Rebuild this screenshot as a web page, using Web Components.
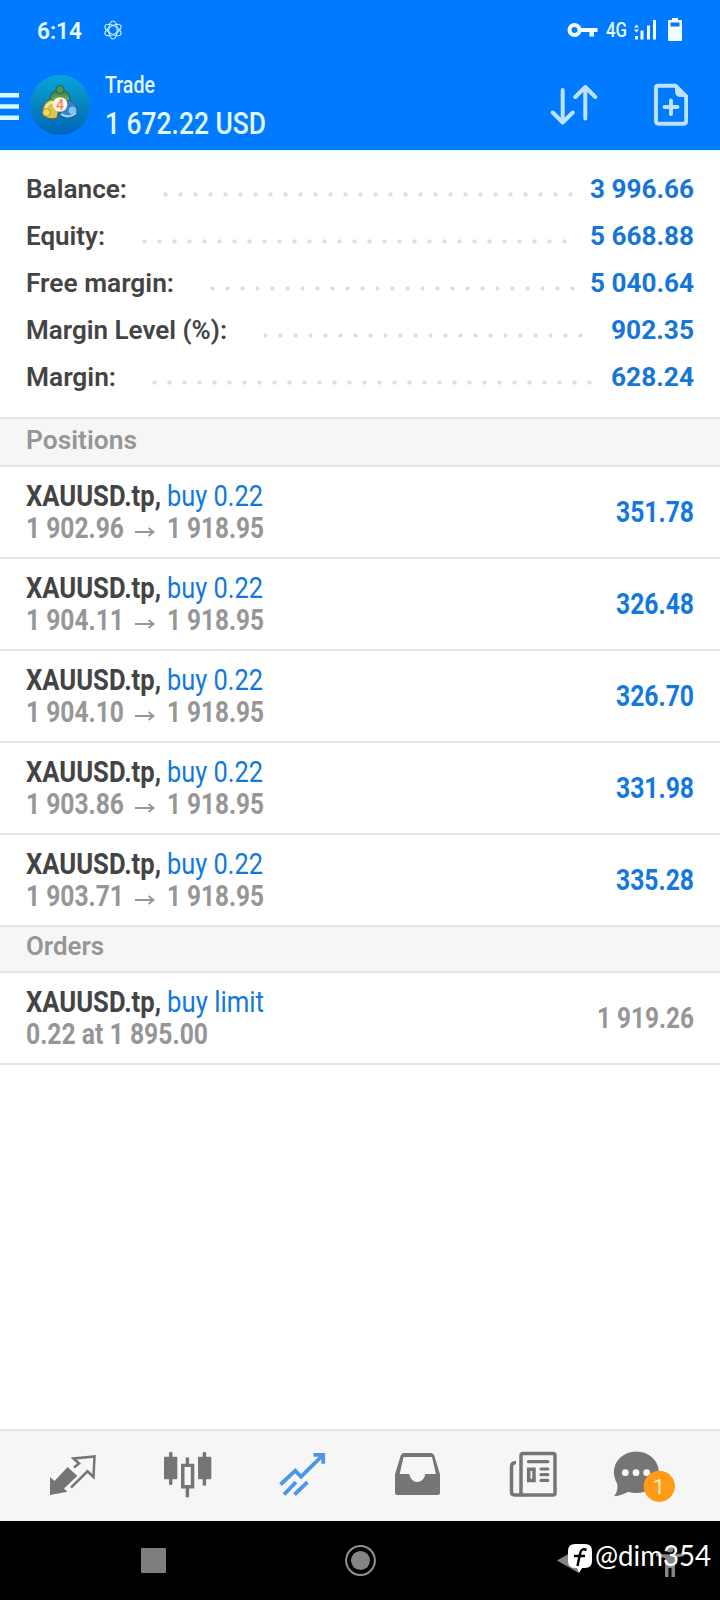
<!DOCTYPE html>
<html lang="en">
<head>
<meta charset="utf-8">
<title>Trade</title>
<style>
  body {
    margin: 0;
    background: #fff;
    font-family: Roboto, "Liberation Sans", sans-serif;
  }
</style>
</head>
<body>
<trade-app></trade-app>

<script>
// text squeezed or stretched to a given width in px
customElements.define('fit-text', class extends HTMLElement {
  constructor() {
    super();
    this.attachShadow({ mode: 'open' }).innerHTML = `
    <style>
      :host { display: inline-block; white-space: nowrap; }
      span { display: inline-block; transform-origin: 0 50%; }
    </style>
    <span><slot></slot></span>`;
  }

  connectedCallback() {
    const width = Number(this.getAttribute('width'));
    const span = this.shadowRoot.querySelector('span');
    const natural = span.getBoundingClientRect().width;
    this.style.width = width + 'px';
    span.style.transform = `scaleX(${width / natural})`;
  }
});

customElements.define('status-bar', class extends HTMLElement {
  constructor() {
    super();
    this.attachShadow({ mode: 'open' }).innerHTML = `
    <style>
      :host {
        display: flex;
        align-items: center;
        height: 60px;
        padding: 0 37px;
        background: #007aff;
        color: #e6faff;
      }
      .time { font-size: 23px; font-weight: 600; line-height: 28px; margin-top: 3px; }
      .atom { margin-left: 22px; }
      .icons { margin-left: auto; display: flex; align-items: center; }
      .net { font-size: 20px; font-weight: 500; line-height: 24px; margin-left: 8px; }
      .signal { margin-left: 7px; }
      .battery { margin-left: 12px; margin-right: 1px; }
      svg { display: block; }
    </style>
    <fit-text class="time" width="45">6:14</fit-text>
    <svg class="atom" width="18" height="20" viewBox="-9 -10 18 20" fill="none" stroke="#d4f3ff" stroke-width="1.100">
      <ellipse rx="4.200" ry="9"/><ellipse rx="4.200" ry="9" transform="rotate(60)"/><ellipse rx="4.200" ry="9" transform="rotate(-60)"/>
    </svg>
    <div class="icons">
      <svg width="31" height="16" viewBox="0 0 31 16" fill="#f2fdff">
        <circle cx="7.500" cy="8" r="5" fill="none" stroke="#f2fdff" stroke-width="4"/>
        <path d="M13 6H30.500V10H27V14.500H22.500V10H13Z"/>
      </svg>
      <fit-text class="net" width="21">4G</fit-text>
      <svg class="signal" width="22" height="20" viewBox="0 0 22 20" fill="#f2fdff">
        <path d="M0 7.500 2.500 4.500 5 7.500ZM0 9.500 2.500 12.500 5 9.500ZM1 16h3v3.500H1ZM6.500 10.500h3v9h-3ZM13 5.500h3v14h-3ZM19 0h3v19.500h-3Z"/>
      </svg>
      <svg class="battery" width="14" height="24" viewBox="0 0 14 24">
        <path fill="#f2fdff" fill-rule="evenodd" d="M4 0h6v2h3q1 0 1 1v19q0 1-1 1H1q-1 0-1-1V3q0-1 1-1h3ZM2.500 4.500v4h9v-4Z"/>
      </svg>
    </div>`;
  }
});

customElements.define('app-bar', class extends HTMLElement {
  constructor() {
    super();
    this.attachShadow({ mode: 'open' }).innerHTML = `
    <style>
      :host {
        display: flex;
        height: 90px;
        background: #007aff;
        color: #e2f8ff;
      }
      svg { display: block; flex: none; }
      .menu { margin-top: 33px; }
      .logo { margin: 15px 0 0 11px; }
      .titles { margin-left: 15px; padding-top: 11px; display: flex; flex-direction: column; align-items: flex-start; }
      .title { font-size: 24px; font-weight: 500; line-height: 28px; }
      .sum { font-size: 32px; font-weight: 500; line-height: 38px; margin-top: 5px; }
      .sort { margin: 22px 0 0 auto; }
      .new { margin: 23px 32px 0 56px; }
    </style>
    <svg class="menu" width="19" height="28" viewBox="0 0 19 28" fill="#dcf9ff"><path d="M0 0h19v4.500H0ZM0 11.200h19v4.600H0ZM0 22.400h19V27H0Z"/></svg>
    <svg class="logo" width="60" height="60" viewBox="0 0 60 60">
      <defs>
        <linearGradient id="sky" x1="0" y1="0" x2="0" y2="1"><stop offset="0" stop-color="#08a5dc"/><stop offset=".5" stop-color="#0784bd"/><stop offset="1" stop-color="#0064bd"/></linearGradient>
        <linearGradient id="green" x1="0" y1="0" x2="0" y2="1"><stop offset="0" stop-color="#2f7d43"/><stop offset="1" stop-color="#9ccc74"/></linearGradient>
      </defs>
      <circle cx="30" cy="30" r="30" fill="url(#sky)"/>
      <path d="M20 28Q19 15 30 15T40 28L36 33H24Z" fill="url(#green)" stroke="#285f4d"/>
      <circle cx="30" cy="14.500" r="4" fill="#4c9a50" stroke="#285f4d"/>
      <path d="M22 24Q12 27 12.500 38Q16 46 27 43L29 33Z" fill="#d9c64c" stroke="#695f38"/>
      <path d="M16 36Q15 29 23 27" fill="none" stroke="#f5eb9a" stroke-width="2"/>
      <circle cx="16.500" cy="37.500" r="3.800" fill="#f2dc5a" stroke="#8b7a35" stroke-width=".7"/>
      <path d="M39 25Q48 29 47.500 38Q42 47 31 42L30 32Z" fill="#3285c9" stroke="#245b85"/>
      <path d="M31 39Q38 44 46 38" fill="none" stroke="#a6dcfa" stroke-width="2"/>
      <circle cx="42.500" cy="35.500" r="3.800" fill="#7cc6f3"/>
      <circle cx="30" cy="29.500" r="7.300" fill="#fff5ec"/>
      <text x="30" y="34.500" text-anchor="middle" font-size="14" font-weight="600" fill="#ef915f">4</text>
    </svg>
    <div class="titles">
      <fit-text class="title" width="50">Trade</fit-text>
      <fit-text class="sum" width="161">1 672.22 USD</fit-text>
    </div>
    <svg class="sort" width="48" height="46" viewBox="550 82 48 46" fill="none" stroke="#bfe2ff" stroke-width="4" stroke-linecap="round" stroke-linejoin="round">
      <path d="M562.700 90V122M552.700 112.500l10 10 10-10M585.300 118.500V87M575.300 97l10-10 10 10"/>
    </svg>
    <svg class="new" width="34" height="44" viewBox="0 0 34 44">
      <path d="M4 2.800H21.500L32.200 13.500V38Q32.200 40.700 29.500 40.700H4.500Q2 40.700 2 38V5Q2 2.800 4 2.800Z" fill="none" stroke="#bfe2ff" stroke-width="3.900"/>
      <path d="M21 2V8Q21 14 27 14H33V12L23 2Z" fill="#bfe2ff"/>
      <path d="M17 17.500V31M10.500 24H23.500" stroke="#bfe2ff" stroke-width="3.900" stroke-linecap="round"/>
    </svg>`;
  }
});

customElements.define('summary-row', class extends HTMLElement {
  constructor() {
    super();
    const [lw, vw, from, to] = this.getAttribute('fit').split(' ').map(Number);
    this.attachShadow({ mode: 'open' }).innerHTML = `
    <style>
      :host {
        display: flex;
        height: 47px;
        line-height: 47px;
        padding: 0 26px;
        font-size: 26px;
        font-weight: 600;
        color: #444;
      }
      .dots {
        width: ${to - from + 15}px;
        height: 5px;
        margin: 26px 0 0 ${from - 7.5 - 26 - lw}px;
        background: radial-gradient(circle, #dedede 1.600px, transparent 2.600px) 0 0 / 15px 5px;
      }
      .value { margin-left: auto; color: #1676d8; font-weight: 700; }
    </style>
    <fit-text width="${lw}">${this.getAttribute('label')}</fit-text>
    <div class="dots"></div>
    <fit-text class="value" width="${vw}">${this.getAttribute('value')}</fit-text>`;
  }
});

customElements.define('section-head', class extends HTMLElement {
  constructor() {
    super();
    this.attachShadow({ mode: 'open' }).innerHTML = `
    <style>
      :host {
        display: block;
        box-sizing: border-box;
        height: 46px;
        padding-left: 26px;
        border-bottom: 2px solid #e4e4e4;
        background: #f6f6f6;
        color: #969696;
        font-size: 26px;
        font-weight: 600;
        line-height: 38px;
      }
      :host([first]) {
        height: 50px;
        border-top: 2px solid #e4e4e4;
        line-height: 42px;
      }
    </style>
    <slot></slot>`;
  }
});

customElements.define('trade-row', class extends HTMLElement {
  constructor() {
    super();
    this.attachShadow({ mode: 'open' }).innerHTML = `
    <style>
      :host {
        display: flex;
        box-sizing: border-box;
        height: 92px;
        padding: 0 26px;
        border-bottom: 2px solid #e4e4e4;
        font-size: 29px;
        line-height: 32px;
        color: #969696;
        font-weight: 700;
      }
      .lines { padding-top: 13px; }
      .line { display: flex; height: 32px; }
      .symbol { color: #444; font-weight: 700; margin-right: 6px; }
      .side { color: #1278dc; font-weight: 400; }
      .arrow { margin: 14px 12px 0 11px; }
      .value { margin-left: auto; line-height: 90px; color: #1278e0; font-weight: 700; }
      :host([pending]) .value { color: #969696; }
    </style>
    <div class="lines">
      <div class="line">
        <fit-text class="symbol" width="135">XAUUSD.tp,</fit-text>
        <fit-text class="side" width="${this.hasAttribute('pending') ? 97 : 96}">${this.getAttribute('side')}</fit-text>
      </div>
      <div class="line">${this.detail()}</div>
    </div>
    <fit-text class="value" width="${this.hasAttribute('pending') ? 97 : 78}">${this.getAttribute('value')}</fit-text>`;
  }

  detail() {
    if (this.hasAttribute('pending')) {
      return `<fit-text width="182">${this.getAttribute('detail')}</fit-text>`;
    }
    return `<fit-text width="98">${this.getAttribute('open')}</fit-text>
        <svg class="arrow" width="20" height="12" viewBox="0 0 20 12" fill="none" stroke="#969696" stroke-width="2"><path d="M0 6H18M13.500 2 18.500 6 13.500 10"/></svg>
        <fit-text width="97">1 918.95</fit-text>`;
  }
});

customElements.define('tab-bar', class extends HTMLElement {
  constructor() {
    super();
    this.attachShadow({ mode: 'open' }).innerHTML = `
    <style>
      :host {
        display: grid;
        grid-template-columns: repeat(6, 115px);
        justify-content: center;
        align-items: center;
        justify-items: center;
        box-sizing: border-box;
        height: 92px;
        border-top: 2px solid #e4e4e4;
        background: #f6f6f6;
      }
      svg { display: block; width: 80px; height: 80px; }
    </style>
    <svg viewBox="-39.500 -40 80 80">
      <path fill="#757575" d="M-22.500 1-18 5-4.800-9 4.800 0-8.500 12.500-5 15.700-22.500 19Z"/>
      <path fill="none" stroke="#757575" stroke-width="2.500" d="M1.500-8.500 6.500-12.500 1-17.500 22-19.500 21 1 15-4.700-1.500 11.700"/>
    </svg>
    <svg viewBox="-39.500 -40 80 80" fill="#757575">
      <rect x="-23.500" y="-19.300" width="13.300" height="22.500" rx="1"/>
      <rect x="-18.500" y="-24.300" width="3.400" height="33.300" rx="1.500"/>
      <path fill-rule="evenodd" d="M-6.500-12.300H6.800V12.400H-6.500ZM-3-9V9H3.300V-9Z"/>
      <path d="M-1.800-18.500h3.400v7h-3.400ZM-1.800 11.500h3.400v9.700h-3.400Z"/>
      <rect x="10.500" y="-19.300" width="13.300" height="22.500" rx="1"/>
      <rect x="15.200" y="-24.300" width="3.400" height="34" rx="1.500"/>
    </svg>
    <svg viewBox="-39.500 -40 80 80" fill="none" stroke="#4b96e8" stroke-width="3.800">
      <path d="M-22 8.500-7.200-5.300-1.500.7 20.500-21M11-21.200H20.700V-12.300M-18.500 18.500-6.500 6.200M-8 18.500 5 6.200"/>
    </svg>
    <svg viewBox="-39.500 -40 80 80">
      <path fill="#757575" fill-rule="evenodd" d="M-22.500-1.500-16.800-20.500Q-16-23-13.500-23H13.500Q16-23 16.800-20.500L22.500-1.500V16.500Q22.500 19 20 19H-20Q-22.500 19-22.500 16.500ZM-14-19-17.800-2H-8.200A8.100 9.400 0 0 0 7.800-2H18.500L14.500-19Z"/>
    </svg>
    <svg viewBox="-39.500 -40 80 80" fill="none" stroke="#757575" stroke-width="3.500">
      <rect x="-11.500" y="-22.600" width="34" height="41.500" rx="2"/>
      <path d="M-16.500-13.500Q-21-13.500-21-9V16Q-21 18.900-18 18.900H-10"/>
      <path stroke-width="3.200" stroke-linecap="round" d="M-4-14.300H15.300M8.500-7H15.300M8.500-1.300H15.300M8.500 4.400H15.300"/>
      <path d="M-3.800-6.700H1.500V4.500H-3.800Z"/>
    </svg>
    <svg viewBox="-39.500 -40 80 80">
      <ellipse cx="-11.200" cy="-3.700" rx="22.500" ry="20.800" fill="#757575"/>
      <path d="M-31 5Q-28 14-33.500 20.300-26 20-18 15Z" fill="#757575"/>
      <g fill="#f6f6f6"><circle cx="-22.200" cy="-3.300" r="3.400"/><circle cx="-11.500" cy="-3.300" r="3.400"/><circle cx="-.8" cy="-3.300" r="3.400"/></g>
      <circle cx="11.800" cy="10.300" r="15.600" fill="#ff9b17"/>
      <text x="11.300" y="18" text-anchor="middle" font-size="21" fill="#fff0cf">1</text>
    </svg>`;
  }
});

customElements.define('nav-bar', class extends HTMLElement {
  constructor() {
    super();
    this.attachShadow({ mode: 'open' }).innerHTML = `
    <style>
      :host {
        display: flex;
        position: relative;
        height: 79px;
        padding-left: 141px;
        background: #000;
      }
      svg { display: block; }
      .square { width: 25px; height: 25px; margin-top: 27px; border-radius: 1px; background: #7e7e7e; }
      .home { margin: 23px 0 0 178px; }
      .back { margin: 23px 0 0 181px; }
      .person { margin: 24px 0 0 73px; }
      /* user tag lies over the buttons */
      .tag {
        position: absolute;
        left: 567px;
        top: 16px;
        display: flex;
        color: #fff;
        font: 28px/36px Lato, sans-serif;
      }
      .tag svg { margin: 6px 2px 0 0; }
    </style>
    <div class="square"></div>
    <svg class="home" width="32" height="32" viewBox="-16.500 -16.500 32 32"><circle r="14.400" fill="none" stroke="#929292" stroke-width="2"/><circle r="9.500" fill="#858585"/></svg>
    <svg class="back" width="26" height="32" viewBox="0 0 26 32"><path d="M0 16.500 22 4V29Z" fill="#858585"/></svg>
    <svg class="person" width="28" height="34" viewBox="0 0 28 34" fill="#858585"><circle cx="14" cy="4" r="3.500"/><path d="M0 8Q14 11 28 8V11L19 13V32H15.500V23H12.500V32H9V13L0 11Z"/></svg>
    <div class="tag">
      <svg width="26" height="31" viewBox="0 0 26 31">
        <path fill="#fff" d="M8 1H18Q25 1 25 8V18Q25 25 18 25H15L12 30 10 25H8Q1 25 1 18V8Q1 1 8 1Z"/>
        <path d="M19.500 7Q14 4.500 13 11L10.500 23M7 13H18" fill="none" stroke="#000" stroke-width="2.500"/>
      </svg>
      <fit-text width="116">@dim354</fit-text>
    </div>`;
  }
});

customElements.define('trade-app', class extends HTMLElement {
  constructor() {
    super();
    this.attachShadow({ mode: 'open' }).innerHTML = `
    <style>
      :host {
        display: flex;
        flex-direction: column;
        width: 720px;
        height: 1600px;
        overflow: hidden;
      }
      .summary { box-sizing: border-box; height: 267px; padding-top: 15px; border-top: 1px solid #d5fbff; }
      main { flex: 1; }
    </style>
    <status-bar></status-bar>
    <app-bar></app-bar>
    <main>
      <div class="summary">
        <summary-row label="Balance:" value="3 996.66" fit="101 104 165.500 570.500"></summary-row>
        <summary-row label="Equity:" value="5 668.88" fit="79 104 144.500 564.500"></summary-row>
        <summary-row label="Free margin:" value="5 040.64" fit="148 104 212.500 572.500"></summary-row>
        <summary-row label="Margin Level (%):" value="902.35" fit="201 83 265.500 580.500"></summary-row>
        <summary-row label="Margin:" value="628.24" fit="90 83 154.500 589.500"></summary-row>
      </div>
      <section-head first><fit-text width="111">Positions</fit-text></section-head>
      <trade-row side="buy 0.22" open="1 902.96" value="351.78"></trade-row>
      <trade-row side="buy 0.22" open="1 904.11" value="326.48"></trade-row>
      <trade-row side="buy 0.22" open="1 904.10" value="326.70"></trade-row>
      <trade-row side="buy 0.22" open="1 903.86" value="331.98"></trade-row>
      <trade-row side="buy 0.22" open="1 903.71" value="335.28"></trade-row>
      <section-head><fit-text width="78">Orders</fit-text></section-head>
      <trade-row pending side="buy limit" detail="0.22 at 1 895.00" value="1 919.26"></trade-row>
    </main>
    <tab-bar></tab-bar>
    <nav-bar></nav-bar>`;
  }
});
</script>
</body>
</html>
